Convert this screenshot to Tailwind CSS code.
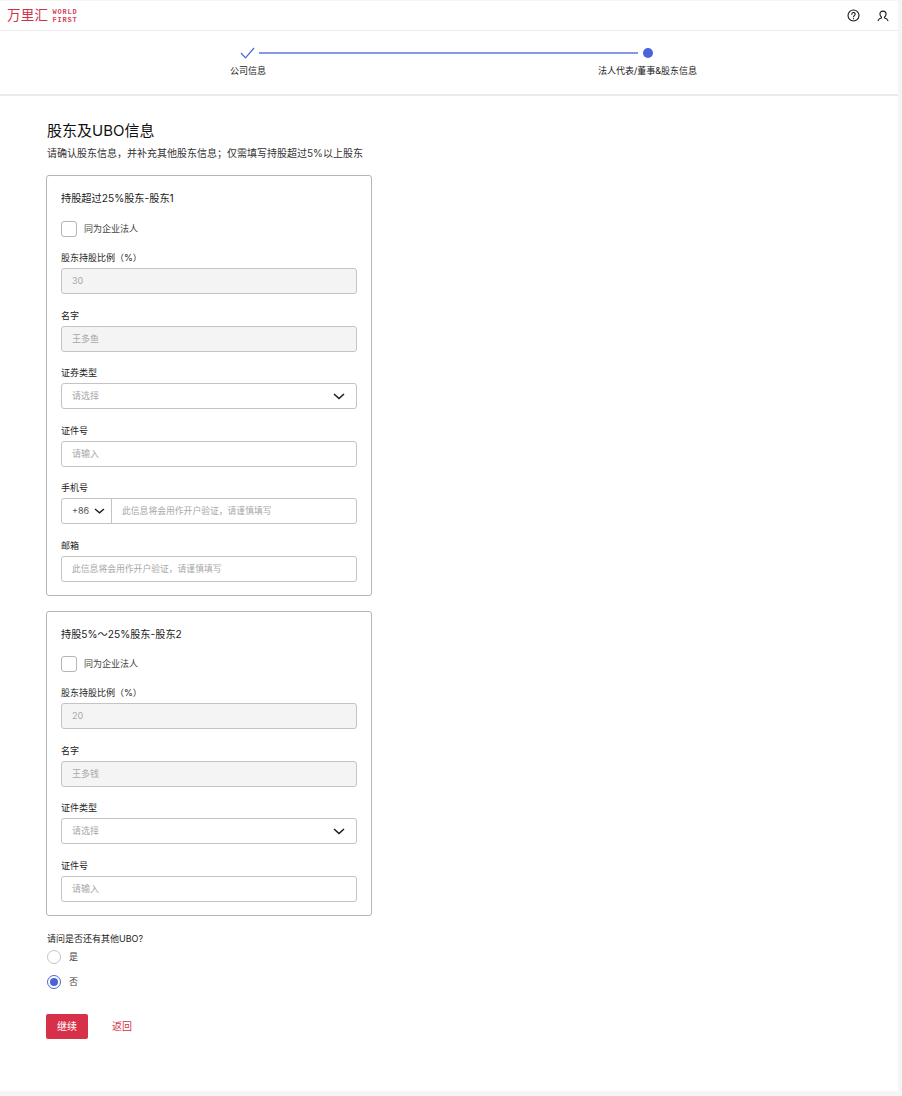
<!DOCTYPE html>
<html lang="zh-CN">
<head>
    <meta charset="UTF-8">
    <meta name="viewport" content="width=device-width, initial-scale=1.0">
    <title>股东及UBO信息</title>
    <script src="https://cdn.jsdelivr.net/npm/@tailwindcss/browser@4"></script>
</head>
<body class="bg-[#f5f5f5] h-[1096px] overflow-hidden font-['Inter','Noto_Sans_CJK_SC',sans-serif] text-[#1a1a1a]">
    <div class="w-[898px] h-[1091px] bg-white">
        <!-- Top bar -->
        <header class="h-[31px] border-t border-b border-t-[#f5f5f5] border-b-[#ebebeb] flex items-center justify-between pl-[7px] pr-[9px]">
            <div class="flex items-center gap-[4px] text-[#d0304a]">
                <span class="text-[13.500px] leading-none tracking-[0.3px] font-normal">万里汇</span>
                <span class="text-[7px] leading-[8px] font-bold tracking-[0.8px] text-[#d8475c] font-['Liberation_Mono',monospace]">WORLD<br>FIRST</span>
            </div>
            <div class="flex items-center gap-[17px]">
                <svg class="w-[13px] h-[13px]" viewBox="0 0 14 14" fill="none" stroke="#1a1a1a" stroke-width="1.200" stroke-linecap="round">
                    <circle cx="7" cy="7" r="5.900"/>
                    <path d="M5.200 5.600a1.800 1.800 0 1 1 2.700 1.500c-.6.400-.9.700-.9 1.300"/>
                    <path d="M7 10.200v.2"/>
                </svg>
                <svg class="w-[12px] h-[12px]" viewBox="0 0 13 13" fill="none" stroke="#1a1a1a" stroke-width="1.200" stroke-linecap="round" stroke-linejoin="round">
                    <path d="M1.200 11.500c.6-1.700 2-2.400 3.600-2.800V7.600C3.800 7 3.200 5.800 3.200 4.400 3.200 2.500 4.500 1.200 6.500 1.200s3.300 1.300 3.300 3.200c0 1.400-.6 2.600-1.600 3.200v1.100c1.600.4 3 1.100 3.600 2.800"/>
                </svg>
            </div>
        </header>

        <!-- Stepper -->
        <div class="h-[65px] border-b-2 border-[#ebebeb] relative">
            <div class="absolute left-[230px] top-0 w-[467px] h-full">
                <div class="flex items-center h-[12px] mt-[16px] pl-[10px] pr-[44px]">
                    <svg class="w-[15px] h-[12px] shrink-0" viewBox="0 0 15 12" fill="none" stroke="#4a63d8" stroke-width="1.200">
                        <path d="M1 6l4.500 4.800L14 1"/>
                    </svg>
                    <div class="flex-1 h-[2px] bg-[#8896e6] ml-[4px] mr-[5px]"></div>
                    <div class="w-[10px] h-[10px] rounded-full bg-[#4a63d8] shrink-0"></div>
                </div>
                <div class="flex justify-between mt-[5px] text-[9px] leading-[14px] text-[#222]">
                    <span>公司信息</span>
                    <span>法人代表/董事&amp;股东信息</span>
                </div>
            </div>
        </div>

        <main class="pl-[46px] w-[372px]">
            <h1 class="text-[15px] leading-[22px] font-normal mt-[24px] pl-px text-[#111]">股东及UBO信息</h1>
            <p class="text-[10px] leading-[16px] mt-[3px] pl-px text-[#333]">请确认股东信息，并补充其他股东信息；仅需填写持股超过5%以上股东</p>

            <!-- Shareholder 1 -->
            <section class="mt-[14px] h-[421px] border border-[#b5b5b5] rounded-[3px] px-[14px] pt-[14px]">
                <h2 class="text-[10.200px] leading-[16px]">持股超过25%股东-股东1</h2>
                <label class="flex items-center gap-[7px] mt-[14px] h-[17px] text-[9px] text-[#444]">
                    <span class="w-[16px] h-[16px] border border-[#b5b5b5] rounded-[3px]"></span>同为企业法人
                </label>
                <div class="mt-[14px] text-[9px] leading-[14px] text-[#222]">股东持股比例（%）</div>
                <div class="mt-[3px] h-[26px] border border-[#c4c4c4] bg-[#f4f4f4] rounded-[3px] flex items-center pl-[10px] text-[9px] text-[#a8a8a8]">30</div>
                <div class="mt-[14.500px] text-[9px] leading-[14px] text-[#222]">名字</div>
                <div class="mt-[3px] h-[26px] border border-[#c4c4c4] bg-[#f4f4f4] rounded-[3px] flex items-center pl-[10px] text-[9px] text-[#a8a8a8]">王多鱼</div>
                <div class="mt-[14.500px] text-[9px] leading-[14px] text-[#222]">证券类型</div>
                <div class="mt-[3px] h-[26px] border border-[#c4c4c4] rounded-[3px] flex items-center justify-between pl-[10px] pr-[11px] text-[9px] text-[#a8a8a8]">
                    请选择
                    <svg class="w-[12px] h-[7px]" viewBox="0 0 12 7" fill="none" stroke="#1a1a1a" stroke-width="1.500"><path d="M1 1l5 4.500L11 1"/></svg>
                </div>
                <div class="mt-[14.500px] text-[9px] leading-[14px] text-[#222]">证件号</div>
                <div class="mt-[3px] h-[26px] border border-[#c4c4c4] rounded-[3px] flex items-center pl-[10px] text-[9px] text-[#a8a8a8]">请输入</div>
                <div class="mt-[14.500px] text-[9px] leading-[14px] text-[#222]">手机号</div>
                <div class="mt-[3px] h-[26px] border border-[#c4c4c4] rounded-[3px] flex items-center text-[9px]">
                    <div class="w-[50px] h-full border-r border-[#c4c4c4] flex items-center gap-[5px] pl-[10px] text-[#555]">
                        +86
                        <svg class="w-[11px] h-[6px]" viewBox="0 0 11 6" fill="none" stroke="#1a1a1a" stroke-width="1.300"><path d="M1 1l4.500 3.800L10 1"/></svg>
                    </div>
                    <span class="pl-[10px] text-[8.800px] text-[#a8a8a8]">此信息将会用作开户验证，请谨慎填写</span>
                </div>
                <div class="mt-[14.500px] text-[9px] leading-[14px] text-[#222]">邮箱</div>
                <div class="mt-[3px] h-[26px] border border-[#c4c4c4] rounded-[3px] flex items-center pl-[10px] text-[8.800px] text-[#a8a8a8]">此信息将会用作开户验证，请谨慎填写</div>
            </section>

            <!-- Shareholder 2 -->
            <section class="mt-[15px] h-[305px] border border-[#b5b5b5] rounded-[3px] px-[14px] pt-[14px]">
                <h2 class="text-[10.200px] leading-[16px]">持股5%～25%股东-股东2</h2>
                <label class="flex items-center gap-[7px] mt-[13px] h-[17px] text-[9px] text-[#444]">
                    <span class="w-[16px] h-[16px] border border-[#b5b5b5] rounded-[3px]"></span>同为企业法人
                </label>
                <div class="mt-[14px] text-[9px] leading-[14px] text-[#222]">股东持股比例（%）</div>
                <div class="mt-[3px] h-[26px] border border-[#c4c4c4] bg-[#f4f4f4] rounded-[3px] flex items-center pl-[10px] text-[9px] text-[#a8a8a8]">20</div>
                <div class="mt-[14.500px] text-[9px] leading-[14px] text-[#222]">名字</div>
                <div class="mt-[3px] h-[26px] border border-[#c4c4c4] bg-[#f4f4f4] rounded-[3px] flex items-center pl-[10px] text-[9px] text-[#a8a8a8]">王多钱</div>
                <div class="mt-[14.500px] text-[9px] leading-[14px] text-[#222]">证件类型</div>
                <div class="mt-[3px] h-[26px] border border-[#c4c4c4] rounded-[3px] flex items-center justify-between pl-[10px] pr-[11px] text-[9px] text-[#a8a8a8]">
                    请选择
                    <svg class="w-[12px] h-[7px]" viewBox="0 0 12 7" fill="none" stroke="#1a1a1a" stroke-width="1.500"><path d="M1 1l5 4.500L11 1"/></svg>
                </div>
                <div class="mt-[14.500px] text-[9px] leading-[14px] text-[#222]">证件号</div>
                <div class="mt-[3px] h-[26px] border border-[#c4c4c4] rounded-[3px] flex items-center pl-[10px] text-[9px] text-[#a8a8a8]">请输入</div>
            </section>

            <!-- Other UBO -->
            <div class="mt-[16px] text-[9px] leading-[14px] text-[#222] pl-px">请问是否还有其他UBO?</div>
            <div class="mt-[3px] flex items-center gap-[8px] h-[15px] text-[9px] text-[#444] pl-px">
                <span class="w-[14px] h-[14px] rounded-full border border-[#c4c4c4]"></span>是
            </div>
            <div class="mt-[10px] flex items-center gap-[8px] h-[15px] text-[9px] text-[#444] pl-px">
                <span class="w-[14px] h-[14px] rounded-full border border-[#4a63d8] flex items-center justify-center"><span class="w-[8px] h-[8px] rounded-full bg-[#4a63d8]"></span></span>否
            </div>
            <div class="mt-[25px] flex items-center">
                <button class="w-[42px] h-[25px] bg-[#d63148] rounded-[2px] text-white text-[10px]">继续</button>
                <a class="ml-[24px] text-[10px] text-[#d63148]">返回</a>
            </div>
        </main>
    </div>
</body>
</html>
